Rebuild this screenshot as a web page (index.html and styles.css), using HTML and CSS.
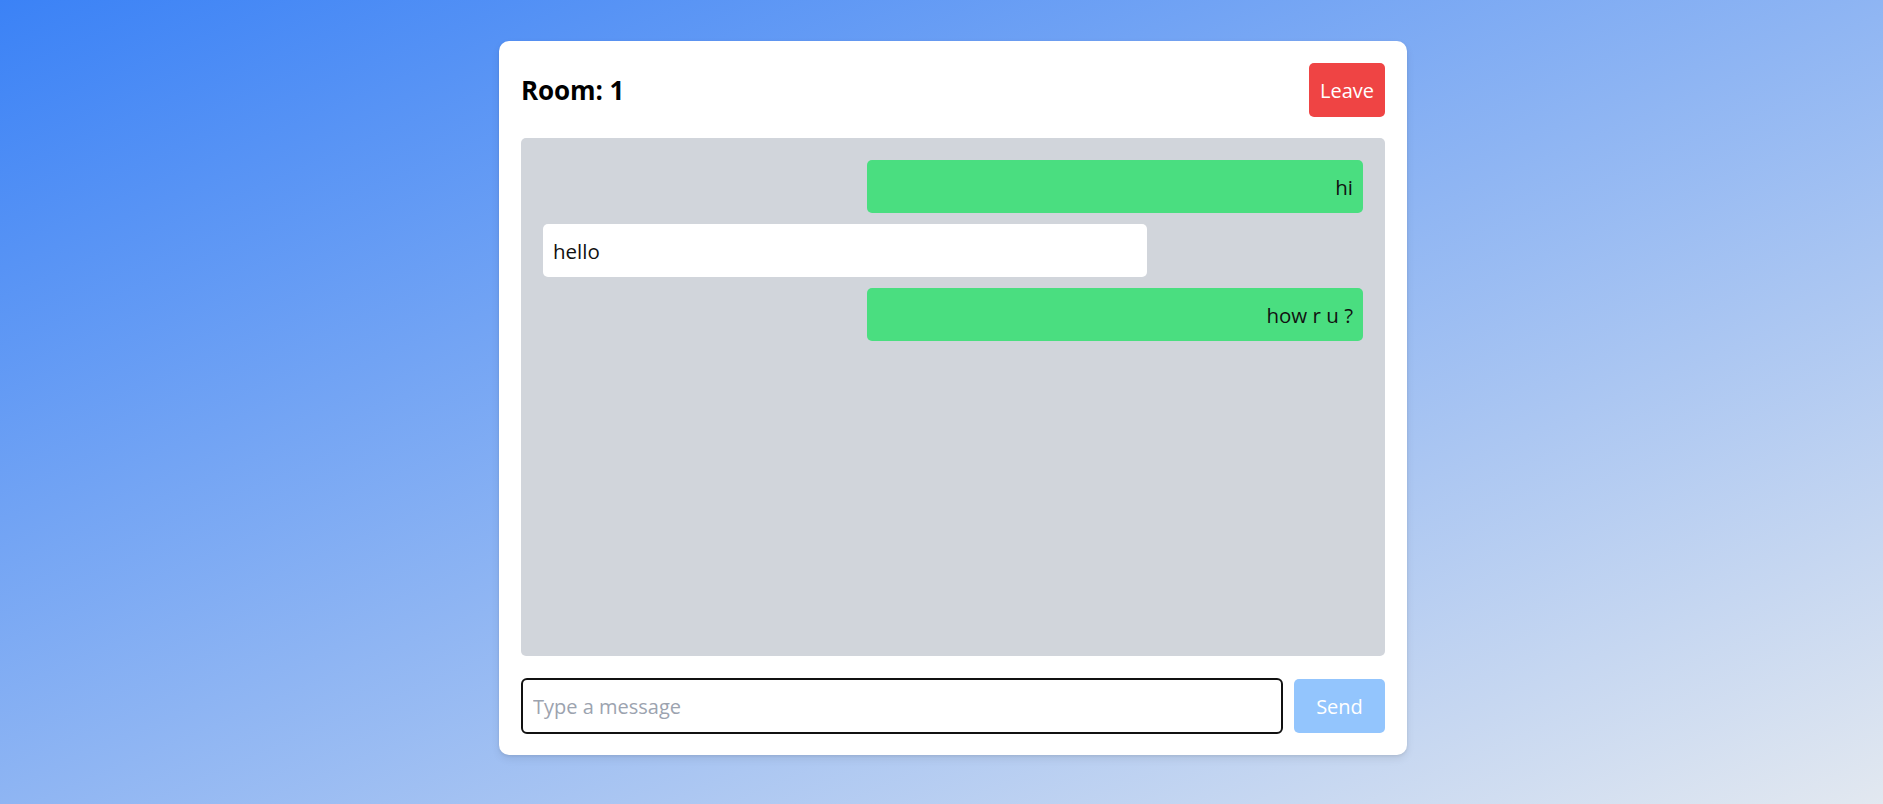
FILE: index.html
```html
<!DOCTYPE html>
<html lang="en">
<head>
<meta charset="utf-8">
<title>Chat Room</title>
<link rel="stylesheet" href="styles.css">
</head>
<body>
<div class="page">
  <div class="card">
    <div class="header">
      <h2 class="title">Room: 1</h2>
      <button class="leave">Leave</button>
    </div>
    <div class="messages">
      <div class="msg mine">hi</div>
      <div class="msg theirs">hello</div>
      <div class="msg mine">how r u ?</div>
    </div>
    <div class="composer">
      <input class="input" type="text" placeholder="Type a message">
      <button class="send">Send</button>
    </div>
  </div>
</div>
</body>
</html>
```
FILE: styles.css
```css
html, body {
  margin: 0;
  padding: 0;
  height: 100%;
}
body {
  font-family: "Open Sans", "Noto Sans", sans-serif;
  background: linear-gradient(to bottom right, #3b82f6, #e2e8f0);
  overflow: hidden;
}
.page {
  height: 804px;
  box-sizing: border-box;
  padding: 41px 0 49px 499px;
  display: flex;
  align-items: stretch;
}
.card {
  width: 908px;
  box-sizing: border-box;
  background: #fff;
  border-radius: 10px;
  box-shadow: 0 4px 8px rgba(0, 0, 0, 0.08), 0 1px 3px rgba(0, 0, 0, 0.08);
  padding: 22px 22px 21px;
  display: flex;
  flex-direction: column;
}
.header {
  display: flex;
  justify-content: space-between;
  align-items: center;
  height: 54px;
  margin-bottom: 21px;
}
.title {
  margin: 0;
  font-size: 26px;
  font-weight: 700;
  color: #000;
  letter-spacing: -0.1px;
}
.leave {
  width: 76px;
  height: 54px;
  border: none;
  border-radius: 5px;
  background: #ef4444;
  color: #fff;
  font-family: inherit;
  font-size: 20px;
  padding: 0;
}
.messages {
  flex: 1;
  background: #d1d5db;
  border-radius: 5px;
  padding: 22px;
  display: flex;
  flex-direction: column;
  gap: 11px;
}
.msg {
  height: 53px;
  box-sizing: border-box;
  display: flex;
  align-items: center;
  padding: 0 10px;
  border-radius: 5px;
  font-size: 20.5px;
  color: #111;
}
.mine {
  align-self: flex-end;
  width: 496px;
  background: #4ade80;
  justify-content: flex-end;
}
.theirs {
  align-self: flex-start;
  width: 604px;
  background: #fff;
}
.composer {
  display: flex;
  align-items: center;
  gap: 11px;
  margin-top: 22px;
  height: 56px;
}
.input {
  flex: 1;
  height: 56px;
  box-sizing: border-box;
  border: 2px solid #111;
  border-radius: 6px;
  padding: 0 10px;
  font-family: inherit;
  font-size: 20px;
  color: #111;
  outline: none;
}
.input::placeholder {
  color: #9ca3af;
}
.send {
  width: 91px;
  height: 54px;
  border: none;
  border-radius: 5px;
  background: #93c5fd;
  color: #fff;
  font-family: inherit;
  font-size: 20px;
  padding: 0;
}
```
